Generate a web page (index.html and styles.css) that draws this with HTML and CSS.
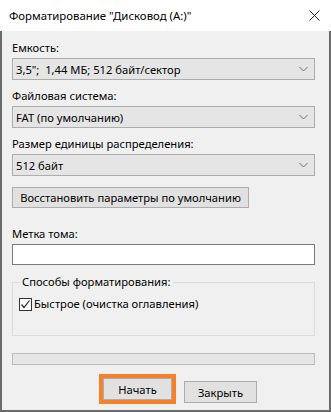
FILE: index.html
```html
<!DOCTYPE html>
<html lang="ru">
<head>
    <meta charset="UTF-8">
    <title>Форматирование</title>
    <link rel="stylesheet" href="styles.css">
</head>
<body>
    <div class="window">
        <div class="title-bar">
            <span class="title">Форматирование "Дисковод (A:)"</span>
            <svg class="close" width="11" height="11" viewBox="0 0 11 11">
                <path d="M0.5 0.5L10.5 10.5M10.5 0.5L0.5 10.5" stroke="#222" stroke-width="1" fill="none"/>
            </svg>
        </div>
        <div class="window-body">
            <div class="field">
                <div class="field-label">Емкость:</div>
                <div class="combo">
                    <span>3,5";&nbsp; 1,44 МБ; 512 байт/сектор</span>
                    <svg width="9" height="6" viewBox="0 0 9 6"><path d="M0.5 1L4.5 5L8.5 1" stroke="#707070" fill="none"/></svg>
                </div>
            </div>
            <div class="field">
                <div class="field-label">Файловая система:</div>
                <div class="combo">
                    <span>FAT (по умолчанию)</span>
                    <svg width="9" height="6" viewBox="0 0 9 6"><path d="M0.5 1L4.5 5L8.5 1" stroke="#707070" fill="none"/></svg>
                </div>
            </div>
            <div class="field">
                <div class="field-label">Размер единицы распределения:</div>
                <div class="combo">
                    <span>512 байт</span>
                    <svg width="9" height="6" viewBox="0 0 9 6"><path d="M0.5 1L4.5 5L8.5 1" stroke="#707070" fill="none"/></svg>
                </div>
            </div>
            <button type="button" class="btn restore-btn">Восстановить параметры по умолчанию</button>

            <div class="field-label volume-label">Метка тома:</div>
            <input type="text" class="text-input">

            <fieldset class="group">
                <legend>Способы форматирования:</legend>
                <label class="check-row">
                    <span class="checkbox">
                        <svg width="11" height="11" viewBox="0 0 11 11"><path d="M1.5 5.5L4 8.5L9.5 1.5" stroke="#222" stroke-width="1.2" fill="none"/></svg>
                    </span>
                    Быстрое (очистка оглавления)
                </label>
            </fieldset>

            <div class="progress"></div>

            <div class="actions">
                <button type="button" class="btn start-btn">Начать</button>
                <button type="button" class="btn close-btn">Закрыть</button>
            </div>
        </div>
    </div>
</body>
</html>
```

FILE: styles.css
```css
body {
    margin: 0;
    padding: 0;
    font-family: 'Noto Sans', 'Open Sans', sans-serif;
    font-size: 11.2px;
    color: #000;
    background-color: #f0f0f0;
}
.window {
    width: 331px;
    height: 412px;
    display: flex;
    flex-direction: column;
}
.title-bar {
    height: 31px;
    flex-shrink: 0;
    background: #fff;
    display: flex;
    align-items: center;
    justify-content: space-between;
    padding: 0 11px 0 9px;
}
.title {
    font-size: 11.4px;
    color: #000;
}
.window-body {
    flex: 1;
    background: #f0f0f0;
    border: 2px solid #6b6b6b;
    border-top: none;
    padding: 9px 14px 0 10px;
    box-sizing: border-box;
}
.field + .field {
    margin-top: 8px;
}
.field-label {
    height: 16px;
    line-height: 16px;
}
.combo {
    margin-top: 2px;
    height: 22px;
    box-sizing: border-box;
    background: #e5e5e5;
    border: 1px solid #adadad;
    display: flex;
    align-items: center;
    justify-content: space-between;
    padding: 0 6px 0 3px;
}
.btn {
    font-family: inherit;
    font-size: 11.2px;
    color: #000;
    background: #e1e1e1;
    border: 1px solid #adadad;
    border-radius: 0;
    padding: 0;
    height: 21px;
    box-sizing: border-box;
    white-space: nowrap;
}
.restore-btn {
    display: block;
    margin-top: 11px;
    width: 237px;
}
.volume-label {
    margin-top: 18px;
}
.text-input {
    display: block;
    margin: 2px 0 0;
    width: 100%;
    height: 21px;
    box-sizing: border-box;
    background: #fff;
    border: 1px solid #7a7a7a;
    padding: 0 3px;
}
.group {
    margin: 9px 0 0;
    border: 1px solid #dcdcdc;
    padding: 7px 6px 0;
    height: 62px;
    box-sizing: border-box;
}
.group legend {
    padding: 0 2px;
    margin-left: 1px;
    line-height: 16px;
}
.check-row {
    display: flex;
    align-items: center;
    gap: 2px;
    line-height: 14px;
}
.checkbox {
    width: 13px;
    height: 13px;
    box-sizing: border-box;
    border: 1px solid #333;
    background: #fff;
    display: flex;
    align-items: center;
    justify-content: center;
}
.progress {
    margin-top: 17px;
    height: 12px;
    box-sizing: border-box;
    border: 1px solid #bcbcbc;
    background: #e6e6e6;
}
.actions {
    display: flex;
    align-items: flex-start;
    gap: 12px;
    margin-top: 13px;
    padding-left: 91px;
}
.start-btn {
    width: 69px;
    height: 22px;
    outline: 4px solid #f5822a;
}
.close-btn {
    width: 73px;
    height: 22px;
    margin-top: 3px;
}
```
